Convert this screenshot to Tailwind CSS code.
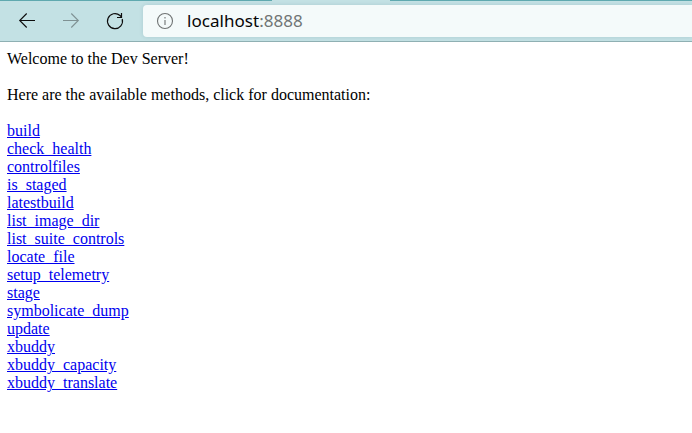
<!DOCTYPE html>
<html lang="en"><head><meta charset="utf-8"><title>Dev Server</title>
<script src="https://cdn.jsdelivr.net/npm/@tailwindcss/browser@4"></script></head>
<body class="h-[433px] overflow-hidden bg-white">
<header class="h-[42px] border-b border-b-[#8fb0b3] bg-[#c3e1e4]">
<div class="flex h-px justify-between bg-[#5fa9af]"><span class="ml-[272px] w-[118px] bg-[#c3e1e4]"></span></div>
<div class="flex h-10 items-center">
<nav class="flex w-[143px] shrink-0 items-center gap-6 pl-[17px] text-[#0c0c0c]">
<svg class="size-5" viewBox="0 0 20 20" fill="none" stroke="currentColor" stroke-width="1.1"><path d="M18 9.500H2.500M9.700 2.500L2.700 9.500L9.700 16.500"/></svg>
<svg class="size-5 text-[#7f9193]" viewBox="0 0 20 20" fill="none" stroke="currentColor" stroke-width="1.1"><path d="M2 9.500H17.500M10.300 2.500L17.300 9.500L10.300 16.500"/></svg>
<svg class="size-5" viewBox="0 0 20 20" fill="none" stroke="currentColor" stroke-width="1.2"><path d="M17.200 8A7.500 7.500 0 1 1 15 4.500L16.500 6M16.500 2V6.500H12"/></svg>
</nav>
<div class="flex h-8 grow items-center rounded-l bg-[#f4fafa] pl-[13px] shadow-[0_0_4px_rgba(0,60,70,0.12)]">
<svg class="size-[18px]" viewBox="0 0 18 18" fill="none" stroke="#6f7373" stroke-width="1.1"><circle cx="9" cy="9" r="7.500"/><path d="M9 8V13M9 5V6.500"/></svg>
<div class="ml-[13px] font-['Noto_Sans',sans-serif] text-[17px] tracking-[0.04px] text-[#050505]">localhost<span class="text-[#707575]">:8888</span></div>
</div></div></header>
<main class="px-[7px] pt-2 font-['Liberation_Serif',serif] text-[16px] leading-[18px] text-black">
<p>Welcome to the Dev Server!</p><p class="mt-[18px]">Here are the available methods, click for documentation:</p>
<ul class="mt-[18px] text-[#0000ee] underline">
<li><a href="#">build</a></li><li><a href="#">check_health</a></li><li><a href="#">controlfiles</a></li><li><a href="#">is_staged</a></li><li><a href="#">latestbuild</a></li><li><a href="#">list_image_dir</a></li><li><a href="#">list_suite_controls</a></li><li><a href="#">locate_file</a></li><li><a href="#">setup_telemetry</a></li><li><a href="#">stage</a></li><li><a href="#">symbolicate_dump</a></li><li><a href="#">update</a></li><li><a href="#">xbuddy</a></li><li><a href="#">xbuddy_capacity</a></li><li><a href="#">xbuddy_translate</a></li>
</ul></main></body></html>
